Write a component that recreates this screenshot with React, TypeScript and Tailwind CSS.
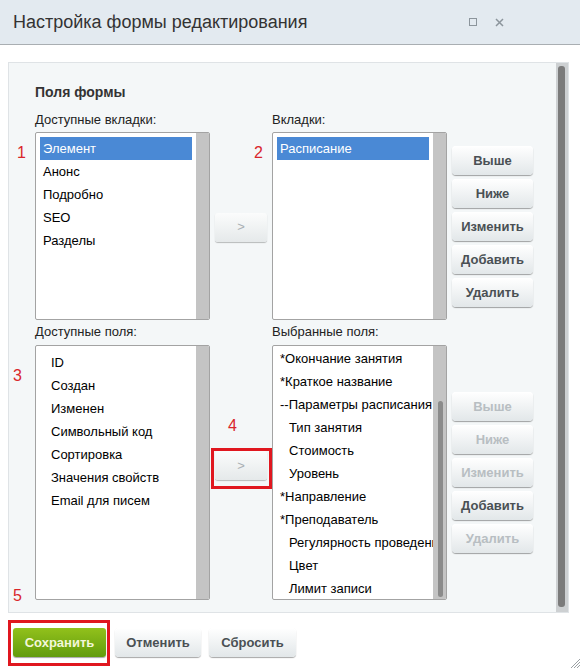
import React from "react";

const font = { fontFamily: '"Liberation Sans", Arial, sans-serif' };

type Item = { text: string; indent?: boolean; selected?: boolean };

function Btn({ children, disabled, w = "w-[81px]" }: { children: React.ReactNode; disabled?: boolean; w?: string }) {
  return (
    <button
      className={`${w} h-[29px] rounded-[4px] bg-gradient-to-b from-[#ffffff] to-[#e2e7e9] text-[13px] font-bold shadow-[0_1px_1px_rgba(0,0,0,0.35),inset_0_1px_0_#fff] ${
        disabled ? "text-[#b8bec2]" : "text-[#4a5054]"
      }`}
    >
      {children}
    </button>
  );
}

function Arrow() {
  return (
    <button className="w-[52px] h-[29px] rounded-[3px] bg-gradient-to-b from-[#fbfcfc] to-[#e5e9ea] text-[13px] text-[#a9afb3] shadow-[0_1px_1px_rgba(0,0,0,0.25)]">
      &gt;
    </button>
  );
}

function ListBox({
  items,
  height,
  pt,
  pl,
  thumb,
}: {
  items: Item[];
  height: string;
  pt: string;
  pl: string;
  thumb?: boolean;
}) {
  return (
    <div className={`flex ${height} w-[175px] rounded-[2px] border border-[#a3a3a3] bg-white overflow-hidden`}>
      <div className={`flex-1 min-w-0 ${pt} pl-[4px] overflow-hidden`}>
        {items.map((it) => (
          <div
            key={it.text}
            className={`h-[23px] leading-[23px] text-[13px] whitespace-nowrap ${
              it.selected ? "bg-[#4a89d5] text-white pl-[3px] mr-[4px]" : `text-black ${it.indent ? "pl-[12px]" : pl}`
            }`}
          >
            {it.text}
          </div>
        ))}
      </div>
      <div className="relative w-[13px] shrink-0 bg-[#c4c4c4]">
        {thumb && <div className="absolute left-[5px] w-[5px] top-[55px] bottom-[2px] rounded-full bg-[#8b8b8b]" />}
      </div>
    </div>
  );
}

function Num({ n, className }: { n: string; className: string }) {
  return <span className={`absolute text-[16px] leading-none text-[#d9262b] ${className}`}>{n}</span>;
}

export default function App() {
  return (
    <div style={font} className="relative w-[580px] h-[668px] bg-white overflow-hidden text-[#333]">
      {/* Title bar */}
      <div className="flex h-[45px] items-center border-b border-[#a9aeb2] bg-[#e3eaf0] pl-[13px] pr-[76px]">
        <div className="flex-1 text-[18px] text-[#333]">Настройка формы редактирования</div>
        <div className="flex items-center gap-[18px]">
          <span className="block h-[8px] w-[8px] border border-[#8c959c]" />
          <svg width="9" height="9" viewBox="0 0 9 9">
            <path d="M1 1L8 8M8 1L1 8" stroke="#8c959c" strokeWidth="1.5" />
          </svg>
        </div>
      </div>

      {/* Panel */}
      <div className="relative mx-[8px] mt-[17px] flex h-[551px] w-[561px] border border-[#dfe3e6] bg-[#f4f7f8]">
        <Num n="1" className="left-[8px] top-[82px]" />
        <Num n="2" className="left-[245px] top-[82px]" />
        <Num n="3" className="left-[4px] top-[305px]" />
        <Num n="4" className="left-[219px] top-[355px]" />
        <Num n="5" className="left-[4px] top-[525px]" />

        <div className="flex-1 pl-[26px] pt-[20px]">
          <div className="h-[18px] text-[14px] font-bold leading-[18px] text-[#333]">Поля формы</div>

          <div className="mt-[11px] flex h-[16px] text-[13px] leading-[16px] text-[#222]">
            <div className="w-[237px]">Доступные вкладки:</div>
            <div>Вкладки:</div>
          </div>
          <div className="mt-[4px] flex">
            <ListBox
              height="h-[188px]"
              pt="pt-[4px]"
              pl="pl-[3px]"
              items={[
                { text: "Элемент", selected: true },
                { text: "Анонс" },
                { text: "Подробно" },
                { text: "SEO" },
                { text: "Разделы" },
              ]}
            />
            <div className="flex w-[62px] items-center justify-center pt-[2px]">
              <Arrow />
            </div>
            <ListBox height="h-[188px]" pt="pt-[4px]" pl="pl-[3px]" items={[{ text: "Расписание", selected: true }]} />
            <div className="ml-[5px] flex flex-col justify-center gap-[4px] pt-[1px]">
              <Btn>Выше</Btn>
              <Btn>Ниже</Btn>
              <Btn>Изменить</Btn>
              <Btn>Добавить</Btn>
              <Btn>Удалить</Btn>
            </div>
          </div>

          <div className="mt-[4px] flex h-[16px] text-[13px] leading-[16px] text-[#222]">
            <div className="w-[237px]">Доступные поля:</div>
            <div>Выбранные поля:</div>
          </div>
          <div className="mt-[5px] flex">
            <ListBox
              height="h-[255px]"
              pt="pt-[5px]"
              pl="pl-[11px]"
              items={[
                { text: "ID" },
                { text: "Создан" },
                { text: "Изменен" },
                { text: "Символьный код" },
                { text: "Сортировка" },
                { text: "Значения свойств" },
                { text: "Email для писем" },
              ]}
            />
            <div className="flex w-[62px] items-center justify-center pb-[14px]">
              <div className="relative">
                <span className="absolute -left-[4px] -right-[5px] -top-[3px] -bottom-[9px] border-[3px] border-[#e0171f]" />
                <Arrow />
              </div>
            </div>
            <ListBox
              height="h-[255px]"
              pt="pt-[1px]"
              pl="pl-[3px]"
              thumb
              items={[
                { text: "*Окончание занятия" },
                { text: "*Краткое название" },
                { text: "--Параметры расписания" },
                { text: "Тип занятия", indent: true },
                { text: "Стоимость", indent: true },
                { text: "Уровень", indent: true },
                { text: "*Направление" },
                { text: "*Преподаватель" },
                { text: "Регулярность проведения", indent: true },
                { text: "Цвет", indent: true },
                { text: "Лимит записи", indent: true },
              ]}
            />
            <div className="ml-[5px] flex flex-col justify-center gap-[4px]">
              <Btn disabled>Выше</Btn>
              <Btn disabled>Ниже</Btn>
              <Btn disabled>Изменить</Btn>
              <Btn>Добавить</Btn>
              <Btn disabled>Удалить</Btn>
            </div>
          </div>
        </div>

        {/* panel scrollbar */}
        <div className="relative w-[12px] shrink-0 bg-[#cdd0d2]">
          <div className="absolute left-[2px] right-[3px] top-[3px] bottom-[5px] rounded-[3px] bg-[#7b7b7b]" />
        </div>
      </div>

      {/* Footer */}
      <div className="relative mt-[15px] flex gap-[8px] pl-[13px]">
        <div className="relative">
          <span className="absolute -left-[5px] -right-[4px] -top-[8px] -bottom-[9px] border-[3px] border-[#e0171f]" />
          <button className="h-[29px] w-[93px] rounded-[3px] bg-gradient-to-b from-[#92c11c] to-[#629c0c] text-[13px] font-bold text-[#f3f7da] shadow-[0_1px_1px_rgba(0,0,0,0.35)]">
            Сохранить
          </button>
        </div>
        <div className="ml-[1px]">
          <Btn w="w-[86px]">Отменить</Btn>
        </div>
        <Btn w="w-[87px]">Сбросить</Btn>
      </div>

      <svg className="absolute bottom-0 right-0" width="11" height="11" viewBox="0 0 11 11">
        <path d="M11 2L2 11M11 5L5 11M11 8L8 11" stroke="#9aa0a4" strokeWidth="1" />
      </svg>
    </div>
  );
}
